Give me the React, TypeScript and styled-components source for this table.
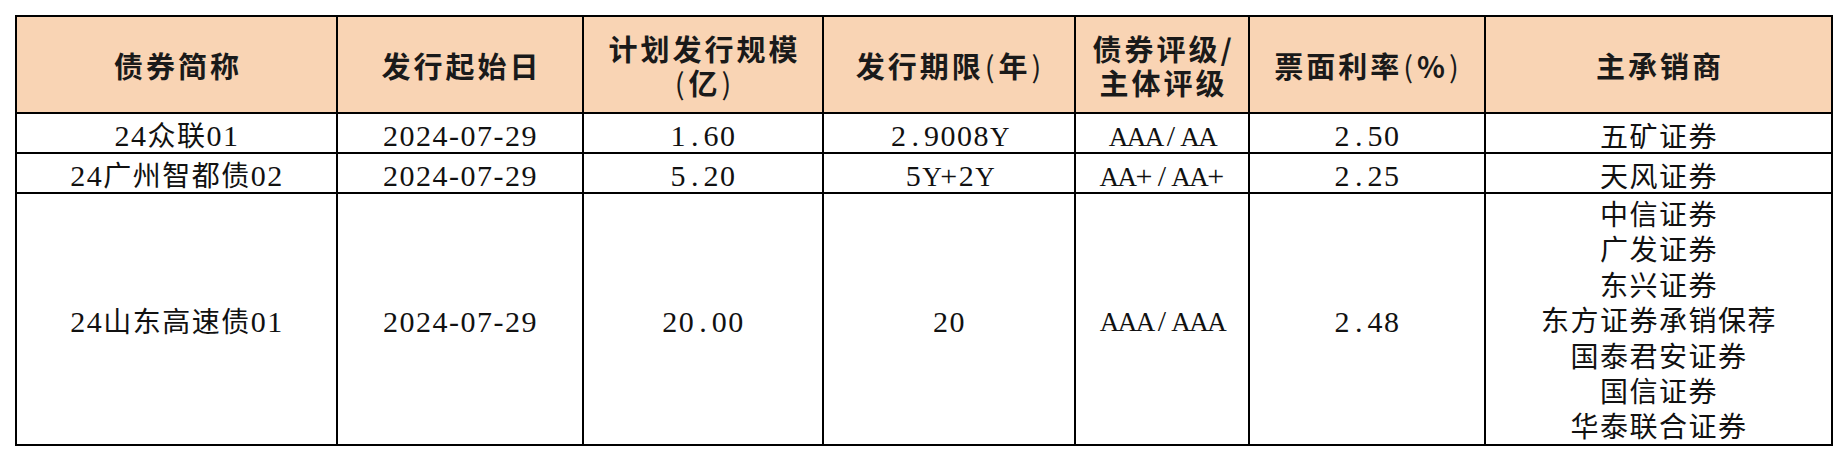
import React from 'react';
import styled, { createGlobalStyle } from 'styled-components';

const Global = createGlobalStyle`
  html, body { margin: 0; padding: 0; background: #ffffff; }
  body {
    font-family: "Liberation Serif", "Noto Sans CJK SC", serif;
    color: #111111;
  }
`;

const Page = styled.div`
  padding: 15px 0 0 15px;
`;

const Table = styled.table`
  border-collapse: collapse;
  table-layout: fixed;
  width: 1818px;
`;

const HeadRow = styled.tr`
  height: 97px;
`;

const BodyRow = styled.tr<{ $h: number }>`
  height: ${(p) => p.$h}px;
`;

const HeadCell = styled.th`
  border: 2px solid #000;
  background: #f9d4b4;
  padding: 0 0 0 3px;
  text-align: center;
  vertical-align: middle;
  font-family: "Noto Sans CJK SC", sans-serif;
  font-weight: 700;
  font-size: 29px;
  line-height: 34px;
  letter-spacing: 3px;
  color: #1a1a1a;
`;

const HeadLine = styled.div`
  white-space: nowrap;
`;

const Paren = styled.span`
  display: inline-block;
  padding: 0 1px;
  font-weight: 400;
`;

const Cell = styled.td<{ $multi?: boolean }>`
  border: 2px solid #000;
  padding: ${(p) => (p.$multi ? '0 0 0 1px' : '4px 0 0 1px')};
  text-align: center;
  vertical-align: middle;
  font-family: "Noto Sans CJK SC", sans-serif;
  font-size: 28px;
  font-weight: 400;
  letter-spacing: 1.5px;
  line-height: 30px;
  white-space: nowrap;
  overflow: visible;
`;

const Digits = styled.span`
  font-family: "Liberation Serif", serif;
  font-size: 30px;
  letter-spacing: 1.5px;
`;

const Letters = styled.span`
  font-family: "Liberation Serif", serif;
  font-size: 27px;
  letter-spacing: -1.5px;
`;

const Punct = styled.span`
  font-family: "Liberation Serif", serif;
  font-size: 30px;
  letter-spacing: 0;
  padding: 0 5px 0 4px;
`;

const Lines = styled.div`
  line-height: 35.4px;
  padding-top: 2px;
`;

const cols = [321, 246, 240, 252, 174, 236, 347];

const headers: string[][] = [
  ['债券简称'],
  ['发行起始日'],
  ['计划发行规模', '(亿)'],
  ['发行期限(年)'],
  ['债券评级/', '主体评级'],
  ['票面利率(%)'],
  ['主承销商'],
];

type Row = { h: number; cells: (string | string[])[] };

const rows: Row[] = [
  { h: 40, cells: ['24众联01', '2024-07-29', '1.60', '2.9008Y', 'AAA/AA', '2.50', '五矿证券'] },
  { h: 40, cells: ['24广州智都债02', '2024-07-29', '5.20', '5Y+2Y', 'AA+/AA+', '2.25', '天风证券'] },
  {
    h: 251,
    cells: [
      '24山东高速债01',
      '2024-07-29',
      '20.00',
      '20',
      'AAA/AAA',
      '2.48',
      ['中信证券', '广发证券', '东兴证券', '东方证券承销保荐', '国泰君安证券', '国信证券', '华泰联合证券'],
    ],
  },
];

function renderHead(line: string) {
  return line.split(/([()])/).map((part, i) =>
    part === '(' || part === ')' ? <Paren key={i}>{part}</Paren> : <React.Fragment key={i}>{part}</React.Fragment>
  );
}

function renderText(text: string) {
  const parts = text.match(/[0-9+\-]+|[.\/]|[A-Z]+|[^\x20-\x7E]+/g) || [];
  return parts.map((part, i) => {
    if (/^[0-9+\-]+$/.test(part)) return <Digits key={i}>{part}</Digits>;
    if (/^[.\/]$/.test(part)) return <Punct key={i}>{part}</Punct>;
    if (/^[A-Z]+$/.test(part)) return <Letters key={i}>{part}</Letters>;
    return <React.Fragment key={i}>{part}</React.Fragment>;
  });
}

export default function App() {
  return (
    <>
      <Global />
      <Page>
        <Table>
          <colgroup>
            {cols.map((w, i) => (
              <col key={i} style={{ width: w }} />
            ))}
          </colgroup>
          <thead>
            <HeadRow>
              {headers.map((h, i) => (
                <HeadCell key={i}>
                  {h.map((l, j) => (
                    <HeadLine key={j}>{renderHead(l)}</HeadLine>
                  ))}
                </HeadCell>
              ))}
            </HeadRow>
          </thead>
          <tbody>
            {rows.map((r, i) => (
              <BodyRow key={i} $h={r.h}>
                {r.cells.map((c, j) => (
                  <Cell key={j} $multi={Array.isArray(c)}>
                    {Array.isArray(c) ? (
                      <Lines>
                        {c.map((l, k) => (
                          <div key={k}>{renderText(l)}</div>
                        ))}
                      </Lines>
                    ) : (
                      renderText(c)
                    )}
                  </Cell>
                ))}
              </BodyRow>
            ))}
          </tbody>
        </Table>
      </Page>
    </>
  );
}
